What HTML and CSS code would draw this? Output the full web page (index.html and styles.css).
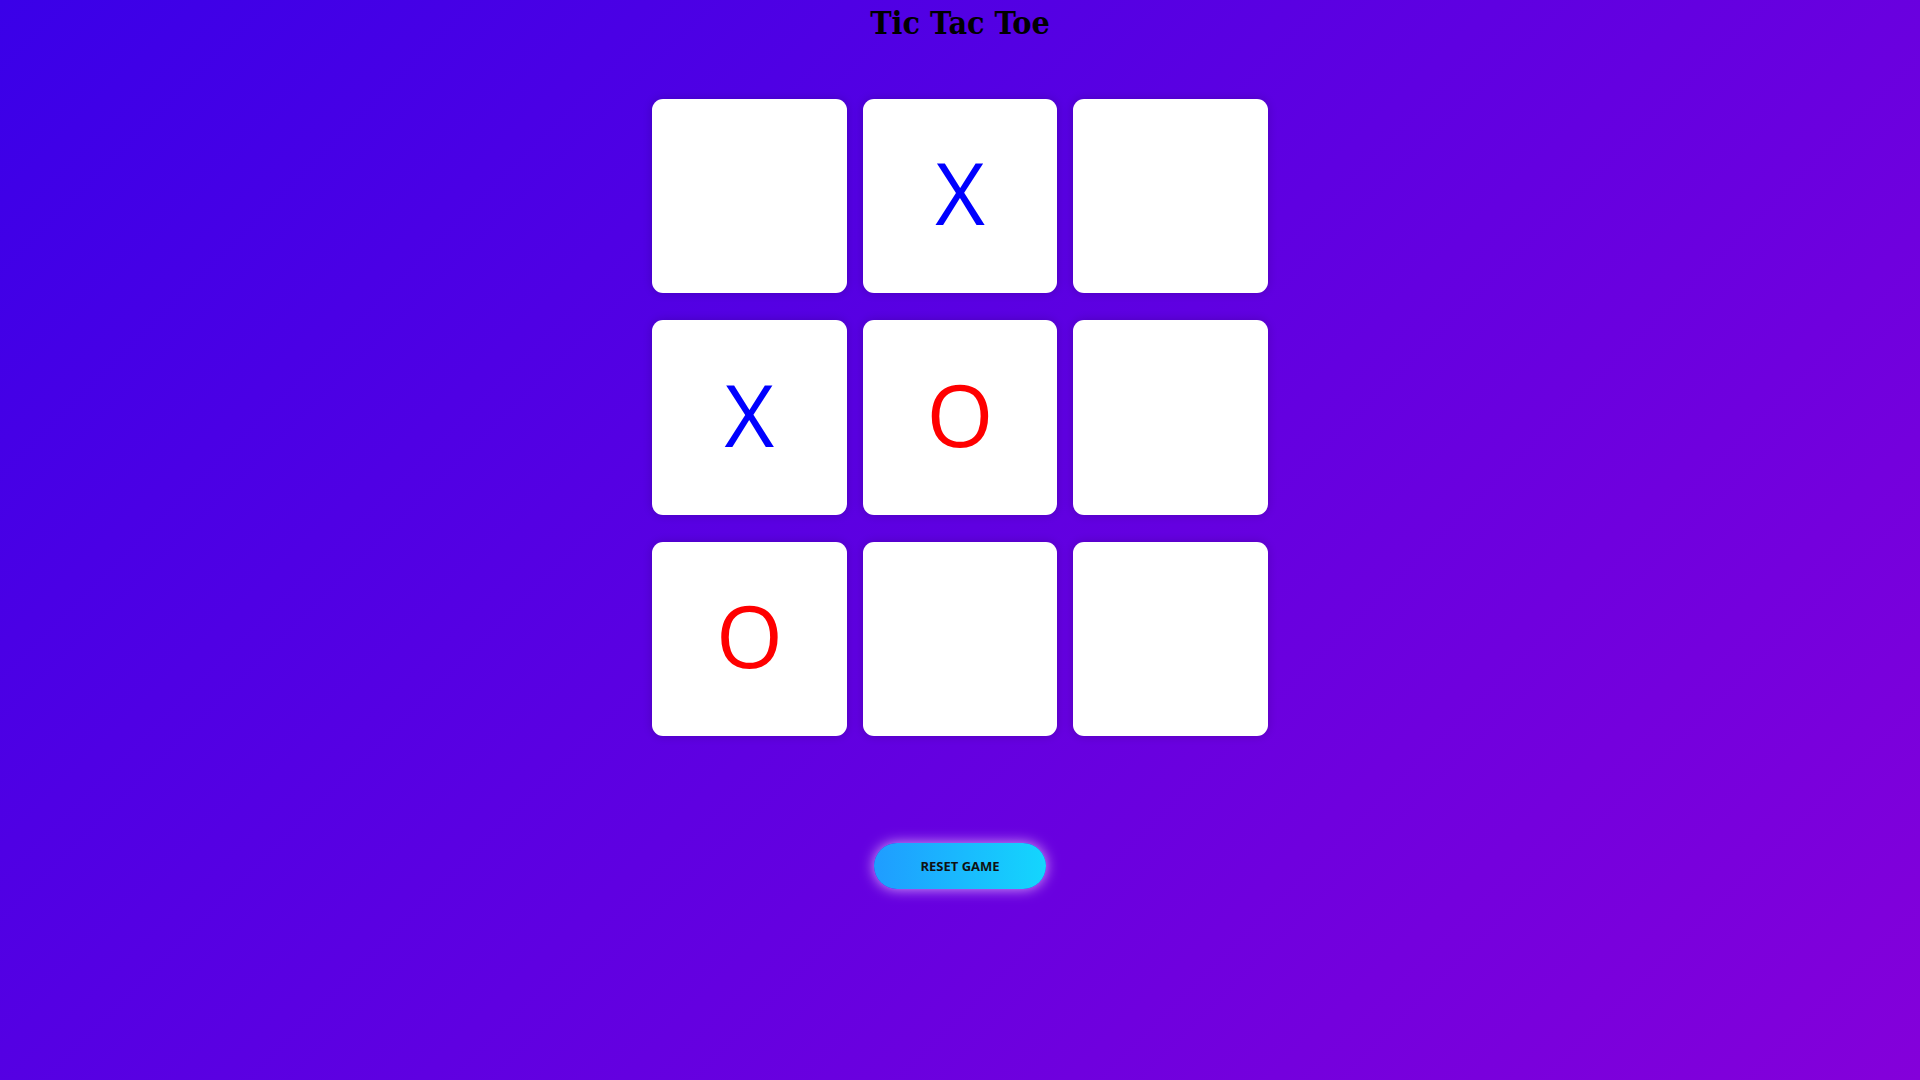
FILE: index.html
```html
<!DOCTYPE html>
<html>
<head>
<meta charset="utf-8">
<link rel="stylesheet" href="styles.css">
</head>
<body>
<main class="game">
  <h1 class="title">Tic Tac Toe</h1>
  <div class="board">
    <div class="cell"></div>
    <div class="cell x">X</div>
    <div class="cell"></div>
    <div class="cell x">X</div>
    <div class="cell o">O</div>
    <div class="cell"></div>
    <div class="cell o">O</div>
    <div class="cell"></div>
    <div class="cell"></div>
  </div>
  <button class="reset">RESET GAME</button>
</main>
</body>
</html>
```
FILE: styles.css
```css
html, body {
  margin: 0;
  height: 100%;
}
body {
  background: linear-gradient(135deg, #3a00e8 0%, #8400da 100%);
  font-family: "Open Sans", sans-serif;
}
.game {
  display: flex;
  flex-direction: column;
  align-items: center;
}
.title {
  margin: 0;
  padding-top: 4px;
  font-family: "DejaVu Serif Condensed", "DejaVu Serif", serif;
  font-stretch: condensed;
  font-size: 32px;
  font-weight: bold;
  color: #000;
}
.board {
  margin-top: 57px;
  display: grid;
  grid-template-columns: repeat(3, 194.4px);
  grid-template-rows: repeat(3, 194.4px);
  column-gap: 16.2px;
  row-gap: 27px;
}
.cell {
  background: #fff;
  border-radius: 11px;
  box-shadow: 0 0 10px rgba(0, 0, 0, 0.18);
  display: flex;
  align-items: center;
  justify-content: center;
  padding-bottom: 8px;
  box-sizing: border-box;
  font-family: "Open Sans", sans-serif;
  font-size: 86px;
  line-height: 1;
}
.cell.x { color: #0000ff; }
.cell.o { color: #ff0000; }
.reset {
  margin-top: 107px;
  width: 172px;
  height: 46px;
  border: none;
  border-radius: 23px;
  background: linear-gradient(90deg, #1f9cff, #14d6fd);
  box-shadow: 0 0 14px rgba(255, 220, 255, 0.75);
  font-family: "Open Sans", sans-serif;
  font-weight: bold;
  font-size: 13px;
  color: #111;
  padding: 0;
}
```
